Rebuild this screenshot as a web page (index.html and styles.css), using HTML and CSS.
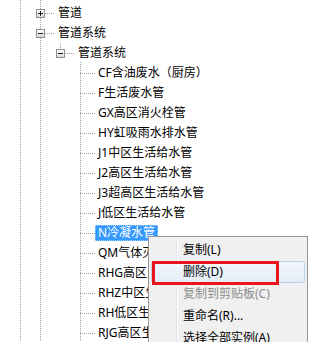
FILE: index.html
```html
<!DOCTYPE html>
<html>
<head>
<meta charset="utf-8">
<link rel="stylesheet" href="styles.css">
</head>
<body>
<div class="screen">
  <div class="tree">
    <div class="row lvl1"><span class="exp plus"></span><span class="hline"></span><span class="label">管道</span></div>
    <div class="row lvl1"><span class="exp"></span><span class="hline"></span><span class="label">管道系统</span></div>
    <div class="row lvl2"><span class="exp"></span><span class="hline"></span><span class="label">管道系统</span></div>
    <div class="leaves">
      <div class="row"><span class="hline leaf"></span><span class="label">CF含油废水（厨房）</span></div>
      <div class="row"><span class="hline leaf"></span><span class="label">F生活废水管</span></div>
      <div class="row"><span class="hline leaf"></span><span class="label">GX高区消火栓管</span></div>
      <div class="row"><span class="hline leaf"></span><span class="label">HY虹吸雨水排水管</span></div>
      <div class="row"><span class="hline leaf"></span><span class="label">J1中区生活给水管</span></div>
      <div class="row"><span class="hline leaf"></span><span class="label">J2高区生活给水管</span></div>
      <div class="row"><span class="hline leaf"></span><span class="label">J3超高区生活给水管</span></div>
      <div class="row"><span class="hline leaf"></span><span class="label">J低区生活给水管</span></div>
      <div class="row"><span class="hline leaf"></span><span class="label sel">N冷凝水管</span></div>
      <div class="row"><span class="hline leaf"></span><span class="label under">QM气体灭火管</span></div>
      <div class="row"><span class="hline leaf"></span><span class="label under">RHG高区生活热水回水管</span></div>
      <div class="row"><span class="hline leaf"></span><span class="label under">RHZ中区生活热水回水管</span></div>
      <div class="row"><span class="hline leaf"></span><span class="label under">RH低区生活热水回水管</span></div>
      <div class="row"><span class="hline leaf"></span><span class="label under">RJG高区生活热水给水管</span></div>
    </div>
  </div>
  <div class="menu">
    <div class="item">复制(L)</div>
    <div class="item hover">删除(D)</div>
    <div class="item disabled">复制到剪贴板(C)</div>
    <div class="item">重命名(R)...</div>
    <div class="item">选择全部实例(A)</div>
  </div>
  <div class="callout"></div>
</div>
</body>
</html>
```
FILE: styles.css
```css
html, body {
  margin: 0;
  padding: 0;
  background: #fff;
}
body {
  font-family: "Noto Sans", "Noto Sans CJK SC", sans-serif;
  font-size: 12px;
  color: #000;
}
.screen {
  position: relative;
  width: 324px;
  height: 342px;
  overflow: hidden;
  background: #fff;
}
.tree {
  padding-top: 3px;
  height: 339px;
  background-image:
    repeating-linear-gradient(to bottom, #a0a0a0 0 1px, transparent 1px 2px),
    repeating-linear-gradient(to bottom, #a0a0a0 0 1px, transparent 1px 2px);
  background-size: 1px 100%, 1px 100%;
  background-position: 20px 0, 40px 0;
  background-repeat: no-repeat;
}
.row {
  height: 20px;
  display: flex;
  align-items: center;
}
.lvl1 { padding-left: 36px; }
.lvl2 {
  padding-left: 56px;
  background-image: repeating-linear-gradient(to bottom, #a0a0a0 0 1px, transparent 1px 2px);
  background-size: 1px 6px;
  background-position: 60px 0;
  background-repeat: no-repeat;
}
.exp {
  position: relative;
  box-sizing: border-box;
  width: 9px;
  height: 9px;
  flex: none;
  border: 1px solid #919191;
  background: linear-gradient(#ffffff, #dadada);
}
.exp::before {
  content: "";
  position: absolute;
  left: 1px;
  top: 3px;
  width: 5px;
  height: 1px;
  background: #1e1e1e;
}
.exp.plus::after {
  content: "";
  position: absolute;
  left: 3px;
  top: 1px;
  width: 1px;
  height: 5px;
  background: #1e1e1e;
}
.hline {
  width: 10px;
  height: 1px;
  flex: none;
  background: repeating-linear-gradient(to right, #a0a0a0 0 1px, transparent 1px 2px);
}
.hline.leaf { width: 15px; }
.label {
  height: 16px;
  line-height: 16px;
  padding: 0 3px;
  white-space: nowrap;
  box-sizing: border-box;
}
.label.under {
  max-width: 53px;
  overflow: hidden;
  padding-right: 0;
}
.label.sel {
  background: #3399ff;
  color: #fff;
  outline: 1px dotted #a6d2ff;
  outline-offset: -1px;
}
.leaves {
  padding-left: 80px;
  background-image: repeating-linear-gradient(to bottom, #a0a0a0 0 1px, transparent 1px 2px);
  background-size: 1px 100%;
  background-position: 80px 0;
  background-repeat: no-repeat;
  margin-top: -1px;
  padding-top: 1px;
}
.leaves .row { margin-left: -80px; padding-left: 80px; }
.menu {
  position: absolute;
  left: 148px;
  top: 236px;
  width: 160px;
  height: 140px;
  box-sizing: border-box;
  border: 1px solid #979797;
  padding: 2px;
  background-color: #f0f0f0;
  background-image: linear-gradient(to right, transparent 27px, #e2e3e3 27px 28px, #ffffff 28px 29px, transparent 29px);
  background-origin: padding-box;
}
.item {
  height: 22px;
  line-height: 22px;
  padding-left: 32px;
  box-sizing: border-box;
  white-space: nowrap;
}
.item.hover {
  border: 1px solid #b7d3f2;
  border-radius: 3px;
  padding-left: 31px;
  line-height: 20px;
  background: linear-gradient(#f3f7fc, #e4ecf6);
}
.item.disabled { color: #8d8d8d; }
.callout {
  position: absolute;
  left: 152px;
  top: 261px;
  width: 127px;
  height: 24px;
  box-sizing: border-box;
  border: 3px solid #e8141e;
}
```
